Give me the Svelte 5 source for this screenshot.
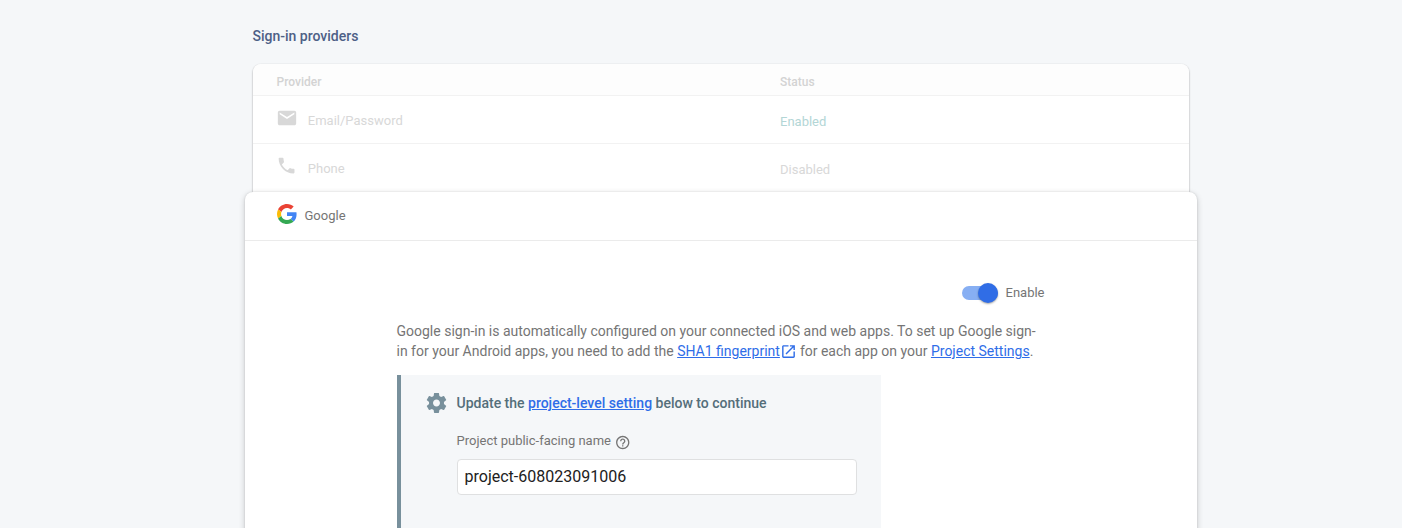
<script>
  const providers = [
    {
      name: 'Email/Password',
      status: 'Enabled',
      path: 'M20 4H4c-1.1 0-1.99.9-1.99 2L2 18c0 1.1.9 2 2 2h16c1.1 0 2-.9 2-2V6c0-1.1-.9-2-2-2zm0 4l-8 5-8-5V6l8 5 8-5v2z',
      viewBox: '0 0 24 24'
    },
    {
      name: 'Phone',
      status: 'Disabled',
      path: 'M6.62 10.79c1.44 2.83 3.76 5.14 6.59 6.59l2.2-2.2c.27-.27.67-.36 1.02-.24 1.12.37 2.33.57 3.57.57.55 0 1 .45 1 1V20c0 .55-.45 1-1 1-9.39 0-17-7.61-17-17 0-.55.45-1 1-1h3.5c.55 0 1 .45 1 1 0 1.25.2 2.45.57 3.57.11.35.03.74-.25 1.02l-2.2 2.2z',
      viewBox: '0 0 25 25'
    }
  ];
  let projectName = $state('project-608023091006');
</script>

<main>
  <h2>Sign-in providers</h2>
  <section class="table">
    <div class="row head"><span>Provider</span><span>Status</span></div>
    {#each providers as p}
      <div class="row">
        <div class="name">
          <span class="icon"><svg width="22" height="22" viewBox={p.viewBox}><path d={p.path} /></svg></span>
          <span>{p.name}</span>
        </div>
        <span class="status" class:on={p.status === 'Enabled'}>{p.status}</span>
      </div>
    {/each}
  </section>

  <section class="panel">
    <header>
      <svg width="20" height="20" viewBox="0 0 48 48">
        <path fill="#ea4335" d="M24 9.5c3.54 0 6.71 1.22 9.21 3.6l6.85-6.85C35.9 2.38 30.47 0 24 0 14.62 0 6.51 5.38 2.56 13.22l7.98 6.19C12.43 13.72 17.74 9.5 24 9.5z" />
        <path fill="#4285f4" d="M46.98 24.55c0-1.57-.15-3.09-.38-4.55H24v9.02h12.94c-.58 2.96-2.26 5.48-4.78 7.18l7.73 6c4.51-4.18 7.09-10.36 7.09-17.65z" />
        <path fill="#fbbc05" d="M10.53 28.59c-.48-1.45-.76-2.99-.76-4.59s.27-3.14.76-4.59l-7.98-6.19C.92 16.46 0 20.12 0 24c0 3.88.92 7.54 2.56 10.78l7.97-6.19z" />
        <path fill="#34a853" d="M24 48c6.48 0 11.93-2.13 15.89-5.81l-7.73-6c-2.15 1.45-4.92 2.3-8.16 2.3-6.26 0-11.57-4.22-13.47-9.91l-7.98 6.19C6.51 42.62 14.62 48 24 48z" />
      </svg>
      <span>Google</span>
    </header>
    <div class="content">
      <div class="enable">
        <span class="switch"><span class="thumb"></span></span>
        <span>Enable</span>
      </div>
      <p>
        Google sign-in is automatically configured on your connected iOS and web apps. To set up Google sign-<br />in for your Android apps, you need to add the <a href="#sha">SHA1 fingerprint</a><svg class="open" width="17" height="17" viewBox="0 0 24 24"><path d="M19 19H5V5h7V3H5c-1.11 0-2 .9-2 2v14c0 1.1.89 2 2 2h14c1.1 0 2-.9 2-2v-7h-2v7zM14 3v2h3.59l-9.83 9.83 1.41 1.41L19 6.41V10h2V3h-7z" /></svg> for each app on your <a href="#settings">Project Settings</a>.
      </p>
      <div class="callout">
        <div class="title">
          <svg width="24" height="24" viewBox="0.5 0 24 24"><path d="M19.43 12.98c.04-.32.07-.64.07-.98s-.03-.66-.07-.98l2.11-1.65c.19-.15.24-.42.12-.64l-2-3.46c-.12-.22-.39-.3-.61-.22l-2.49 1c-.52-.4-1.08-.73-1.69-.98l-.38-2.65C14.46 2.18 14.25 2 14 2h-4c-.25 0-.46.18-.49.42l-.38 2.65c-.61.25-1.17.59-1.69.98l-2.49-1c-.23-.09-.49 0-.61.22l-2 3.46c-.13.22-.07.49.12.64l2.11 1.65c-.04.32-.07.65-.07.98s.03.66.07.98l-2.11 1.65c-.19.15-.24.42-.12.64l2 3.46c.12.22.39.3.61.22l2.49-1c.52.4 1.08.73 1.69.98l.38 2.65c.03.24.24.42.49.42h4c.25 0 .46-.18.49-.42l.38-2.65c.61-.25 1.17-.59 1.69-.98l2.49 1c.23.09.49 0 .61-.22l2-3.46c.12-.22.07-.49-.12-.64l-2.11-1.65zM12 15.5c-1.93 0-3.5-1.57-3.5-3.5s1.57-3.5 3.5-3.5 3.5 1.57 3.5 3.5-1.57 3.5-3.5 3.5z" /></svg>
          <span>Update the <a href="#level">project-level setting</a> below to continue</span>
        </div>
        <label for="name">
          <span>Project public-facing name</span>
          <svg width="16" height="16" viewBox="0.4 0.8 24 24"><path d="M11 18h2v-2h-2v2zm1-16C6.48 2 2 6.48 2 12s4.480 10 10 10 10-4.480 10-10S17.520 2 12 2zm0 18c-4.410 0-8-3.590-8-8s3.590-8 8-8 8 3.590 8 8-3.590 8-8 8zm0-14c-2.210 0-4 1.790-4 4h2c0-1.100.9-2 2-2s2 .9 2 2c0 2-3 1.750-3 5h2c0-2.250 3-2.500 3-5 0-2.210-1.790-4-4-4z" /></svg>
        </label>
        <input id="name" type="text" spellcheck="false" bind:value={projectName} />
      </div>
    </div>
  </section>
</main>

<style>
  :global(body) {
    background: #f5f7f9;
    overflow: hidden;
  }
  main {
    box-sizing: border-box;
    height: 528px;
    overflow: hidden;
    padding: 26px 205.5px 0 244.5px;
    font: 13px/20px Roboto, sans-serif;
    color: #757575;
  }
  svg {
    display: block;
    fill: currentColor;
    flex: none;
  }
  h2 {
    margin: 0 0 18px 8px;
    font-size: 14px;
    line-height: 20px;
    font-weight: 500;
    color: #4d6086;
  }
  .table {
    margin: 0 8px;
    height: 128px;
    background: #fff;
    border-radius: 8px 8px 0 0;
    box-shadow: 0 0 1px rgba(0, 0, 0, 0.12), 0 1px 2px rgba(0, 0, 0, 0.38);
    color: #d8d8d8;
  }
  .row {
    display: grid;
    grid-template-columns: 503.5px 1fr;
    box-sizing: border-box;
    height: 48px;
    padding: 0 24px;
    align-items: center;
    border-bottom: 1px solid #f2f2f2;
  }
  .row:last-child {
    border-bottom: 0;
  }
  .head {
    height: 32px;
    padding-top: 4px;
    font-size: 12px;
    font-weight: 500;
    color: #d3d3d3;
    background: #fdfdfd;
    border-radius: 8px 8px 0 0;
  }
  .name {
    display: flex;
    align-items: center;
    padding-top: 2px;
  }
  .row:last-child .name {
    padding-top: 1px;
  }
  .icon {
    display: flex;
    justify-content: center;
    width: 21px;
    margin-right: 10.3px;
    padding-bottom: 6px;
  }
  .status {
    padding-top: 4px;
  }
  .on {
    color: #b3d6d6;
  }
  .panel {
    position: relative;
    height: 420px;
    background: #fff;
    border-radius: 8px 8px 0 0;
    box-shadow: 0 0 2px rgba(0, 0, 0, 0.13), 0 2px 6px rgba(0, 0, 0, 0.2);
  }
  header {
    display: flex;
    gap: 8px;
    box-sizing: border-box;
    height: 49px;
    padding: 12px 32px;
    border-bottom: 1px solid #ebebeb;
  }
  header span {
    padding-top: 2px;
  }
  .content {
    width: 648px;
    margin-left: 152px;
    padding-top: 42px;
  }
  .enable {
    display: flex;
    align-items: center;
    justify-content: flex-end;
    gap: 8px;
    height: 20px;
  }
  .switch {
    display: flex;
    align-items: center;
    justify-content: flex-end;
    width: 36px;
    height: 14px;
    border-radius: 7px;
    background: #87aff3;
  }
  .thumb {
    flex: none;
    width: 20px;
    height: 20px;
    border-radius: 50%;
    background: #306de6;
    box-shadow: 0 1px 2px rgba(0, 0, 0, 0.35);
  }
  p {
    margin: 18px 0 14px;
    font-size: 14px;
    line-height: 20px;
    white-space: nowrap;
  }
  a {
    color: #2f6de8;
    text-decoration: underline;
  }
  .open {
    display: inline-block;
    margin-right: -0.5px;
    vertical-align: -4px;
    color: #2f6de8;
  }
  .callout {
    box-sizing: border-box;
    width: 484px;
    height: 240px;
    padding: 16px 24px 0 24px;
    border-left: 4px solid #78909c;
    background: #f5f7f9;
  }
  .title {
    display: flex;
    align-items: center;
    gap: 8px;
    height: 24px;
    font-size: 14px;
    font-weight: 500;
    color: #546e7a;
  }
  .title svg {
    color: #78909c;
  }
  label {
    display: flex;
    align-items: center;
    gap: 4px;
    margin: 16px 0 8px 32px;
    height: 20px;
  }
  label svg {
    margin-top: 3px;
    overflow: visible;
  }
  input {
    display: block;
    box-sizing: border-box;
    width: 400px;
    height: 36px;
    margin-left: 32px;
    padding: 0 7px 2px;
    border: 1px solid #dfe0e1;
    border-radius: 4px;
    outline: 0;
    background: #fff;
    font: 16px/20px Roboto, sans-serif;
    color: #212121;
  }
</style>
